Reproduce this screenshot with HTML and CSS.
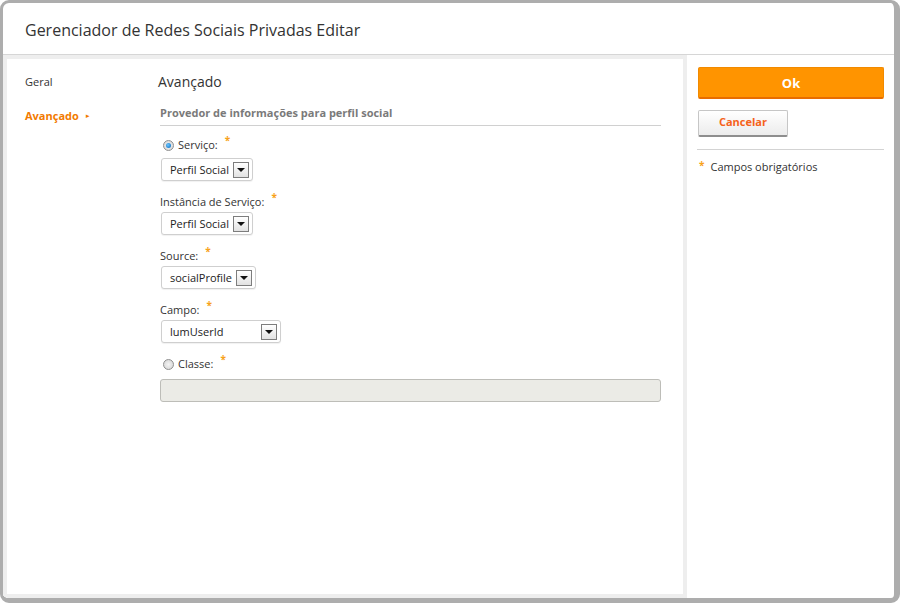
FILE: index.html
```html
<!DOCTYPE html>
<html lang="pt">
<head>
<meta charset="utf-8">
<title>Gerenciador de Redes Sociais Privadas Editar</title>
<link rel="stylesheet" href="styles.css">
</head>
<body>
<div class="window">
  <header class="header">
    <h1 class="title">Gerenciador de Redes Sociais Privadas Editar</h1>
  </header>
  <div class="body">
    <div class="content">
      <nav class="nav">
        <div class="nav-item">Geral</div>
        <div class="nav-item active">Avançado <span class="arrow">&#9658;</span></div>
      </nav>
      <main class="main">
        <h2 class="page-title">Avançado</h2>
        <h3 class="section">Provedor de informações para perfil social</h3>

        <div class="radio-row first">
          <span class="radio checked"></span>
          <span class="label">Serviço:</span><span class="req">*</span>
        </div>
        <div class="select sel-a"><span>Perfil Social</span><span class="drop"></span></div>

        <div class="label-row"><span class="label">Instância de Serviço:</span><span class="req">*</span></div>
        <div class="select sel-a"><span>Perfil Social</span><span class="drop"></span></div>

        <div class="label-row"><span class="label">Source:</span><span class="req">*</span></div>
        <div class="select sel-b"><span>socialProfile</span><span class="drop"></span></div>

        <div class="label-row"><span class="label">Campo:</span><span class="req">*</span></div>
        <div class="select sel-c"><span>lumUserId</span><span class="drop"></span></div>

        <div class="radio-row last">
          <span class="radio"></span>
          <span class="label">Classe:</span><span class="req">*</span>
        </div>
        <div class="text-input"></div>
      </main>
    </div>
    <aside class="side">
      <button class="btn-ok">Ok</button>
      <button class="btn-cancel">Cancelar</button>
      <div class="side-rule"></div>
      <div class="legend"><span class="req legend-star">*</span>Campos obrigatórios</div>
    </aside>
  </div>
</div>
</body>
</html>
```

FILE: styles.css
```css
* { box-sizing: border-box; }
html, body { margin: 0; padding: 0; background: #ffffff; }
body {
  width: 900px;
  height: 603px;
  font-family: "Open Sans", "Noto Sans", sans-serif;
  color: #333;
}
.window {
  width: 900px;
  height: 603px;
  border-style: solid;
  border-color: #adadad;
  border-width: 3px 6px 5px 3px;
  border-radius: 9px;
  background: #fff;
  display: flex;
  flex-direction: column;
  overflow: hidden;
}
.header {
  height: 52px;
  flex: none;
  border-bottom: 1px solid #d6d6d6;
  padding-left: 22px;
  display: flex;
  align-items: center;
}
.title {
  margin: 0;
  font-weight: normal;
  font-size: 16px;
  color: #333;
  padding-top: 2px;
}
.body {
  flex: 1;
  display: flex;
  min-height: 0;
}
.content {
  width: 684px;
  flex: none;
  border: 4px solid #eeeeee;
  display: flex;
  background: #fff;
}
.nav {
  width: 153px;
  flex: none;
  padding: 15px 0 0 18px;
  font-size: 11px;
}
.nav-item {
  height: 16px;
  line-height: 16px;
  color: #333;
}
.nav-item + .nav-item { margin-top: 18px; }
.nav-item.active {
  color: #f27a00;
  font-weight: bold;
}
.arrow {
  font-size: 6px;
  vertical-align: middle;
  margin-left: 3px;
  position: relative;
  top: -1px;
}
.main {
  width: 501px;
  flex: none;
  padding-top: 13px;
  font-size: 11px;
}
.page-title {
  margin: 0 0 0 -2px;
  font-size: 14px;
  font-weight: normal;
  color: #333;
  line-height: 20px;
  height: 20px;
}
.section {
  margin: 13px 0 0 0;
  font-size: 11px;
  font-weight: bold;
  color: #7a7a7a;
  line-height: 16px;
  padding-bottom: 4px;
  border-bottom: 1px solid #d0d0d0;
}
.label { color: #333; line-height: 16px; }
.req {
  color: #f7a21b;
  font-weight: bold;
  font-size: 10px;
  vertical-align: top;
  position: relative;
  top: -5px;
  margin-left: 7px;
}
.radio-row {
  display: flex;
  align-items: center;
  height: 16px;
  padding-left: 3px;
}
.radio-row.first { margin-top: 11px; }
.radio-row.last { margin-top: 13px; }
.radio-row .label { margin-left: 4px; }
.radio {
  width: 11px;
  height: 11px;
  border-radius: 50%;
  border: 1px solid #8f8f8f;
  background: radial-gradient(circle at 50% 50%, #f4f4f4 0, #dcdcdc 70%);
  position: relative;
}
.radio.checked::after {
  content: "";
  position: absolute;
  left: 2px;
  top: 2px;
  width: 5px;
  height: 5px;
  border-radius: 50%;
  background: radial-gradient(circle at 40% 40%, #6cc7ff 0, #1577c9 80%);
}
.label-row {
  height: 16px;
  margin-top: 13px;
  display: flex;
  align-items: center;
}
.select {
  margin-left: 1px;
  margin-top: 2px;
  height: 23px;
  border: 1px solid #cfcfcf;
  border-radius: 3px;
  box-shadow: 0 1px 1px rgba(0,0,0,0.06);
  display: flex;
  align-items: center;
  justify-content: space-between;
  padding: 0 3px 0 8px;
  font-size: 11px;
  color: #222;
  background: #fff;
}
.radio-row + .select { margin-top: 5px; }
.sel-a { width: 92px; }
.sel-b { width: 95px; }
.sel-c { width: 120px; }
.drop {
  width: 16px;
  height: 16px;
  flex: none;
  border: 1px solid #7d7d7d;
  background: linear-gradient(#ffffff, #e2e2e2);
  position: relative;
}
.drop::after {
  content: "";
  position: absolute;
  left: 3px;
  top: 5px;
  border-left: 4px solid transparent;
  border-right: 4px solid transparent;
  border-top: 4px solid #111;
}
.text-input {
  margin-top: 7px;
  width: 501px;
  height: 23px;
  border: 1px solid #bdbdb8;
  border-radius: 3px;
  background: #ebebe6;
}
.side {
  flex: 1;
  padding: 12px 9px 0 11px;
}
.btn-ok {
  display: block;
  width: 186px;
  height: 32px;
  border: 1px solid #f18a00;
  border-bottom: 2px solid #e86d00;
  border-radius: 2px;
  background: #ff9400;
  color: #fff;
  font-family: inherit;
  font-weight: bold;
  font-size: 13px;
  padding: 0;
}
.btn-cancel {
  display: block;
  margin-top: 11px;
  width: 90px;
  height: 27px;
  border: 1px solid #c6c6c6;
  border-bottom: 2px solid #8e8e8e;
  border-radius: 2px;
  background: linear-gradient(#ffffff, #ececec);
  color: #f5621a;
  font-family: inherit;
  font-weight: bold;
  font-size: 11px;
  padding: 0 0 3px 0;
}
.side-rule {
  margin: 12px 0 0 -1px;
  width: 187px;
  border-top: 1px solid #d3d3d3;
}
.legend {
  margin-top: 9px;
  font-size: 11px;
  line-height: 16px;
  color: #333;
  display: flex;
  align-items: center;
}
.legend-star {
  margin-left: 1px;
  margin-right: 6px;
  top: -2px;
  vertical-align: baseline;
}
```
